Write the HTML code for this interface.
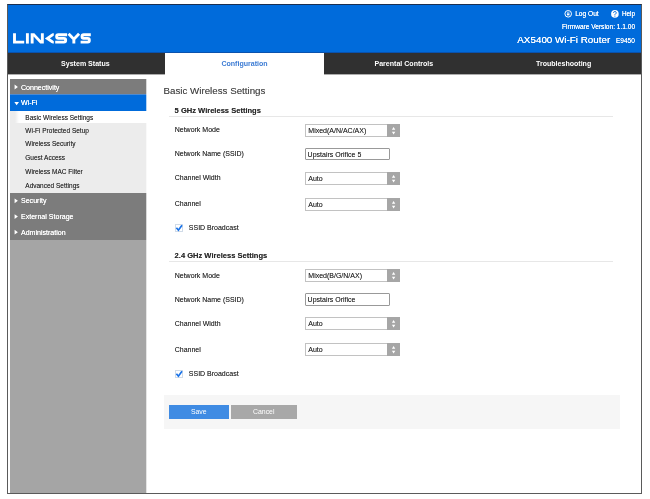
<!DOCTYPE html>
<html>
<head>
<meta charset="utf-8">
<style>
*{box-sizing:border-box;margin:0;padding:0}
html,body{width:650px;height:499px;background:#fff;overflow:hidden}
body{font-family:"Liberation Sans",sans-serif;position:relative;color:#333}
div,span,svg{position:absolute;white-space:nowrap}
#frame{left:7px;top:4px;width:635px;height:490px;border:1px solid #5a5a5a;border-top-color:#1a2f50;z-index:9}
#hdr{left:7px;top:4px;width:635px;height:49px;background:#006bdb;border-top:1px solid #0a2a5a;border-left:1px solid #0a2a5a}
#nav{left:7px;top:53px;width:635px;height:21px;background:#303030}
#nav2{left:7px;top:74px;width:635px;height:1px;background:#acacac}
.tab{top:53px;height:21px;line-height:21px;text-align:center;color:#fff;font-weight:bold;font-size:7.05px}
.tab.act{background:#fff;color:#3b7bd4;height:22px}
.hr{color:#fff;text-shadow:0 0 .3px #fff}
#side{left:10px;top:79px;width:137px;height:414px;background:#a5a5a5}
.mi{left:10px;width:137px;height:16px;background:#7c7c7c;color:#fff;font-size:7.05px;line-height:16px;padding-left:11px;text-shadow:0 0 .3px #fff}
.mi.on{background:#006bdb}
.tr{width:0;height:0;border-left:3.5px solid #fff;border-top:2.5px solid transparent;border-bottom:2.5px solid transparent}
.td{width:0;height:0;border-top:3.5px solid #fff;border-left:2.5px solid transparent;border-right:2.5px solid transparent}
#sub{left:10px;top:111px;width:137px;height:82px;background:#ececec}
.si{left:10px;width:137px;height:13px;line-height:13px;font-size:6.5px;color:#2a2a2a;padding-left:15.3px}
.si.on{background:linear-gradient(90deg,#ececec 0,#ececec 5px,#fff 9px)}
#h1{left:163.5px;top:84.5px;font-size:9.75px;line-height:12px;color:#444}
.sec{left:174.6px;font-size:7.55px;line-height:10px;font-weight:bold;color:#2a2a2a}
.line{left:169px;width:444px;height:1px;background:#e7e7e7}
.lb{left:174.7px;font-size:7px;line-height:10px;color:#2a2a2a}
.sel{left:305px;width:95px;height:13px;border:1px solid #c2c2c2;background:#fff;font-size:7px;line-height:11px;padding-left:2.3px;color:#2a2a2a}
.sel i{position:absolute;right:-1px;top:-1px;width:13px;height:13px;background:#a6a6a6}
.inp{left:305px;width:85px;height:12px;border:1px solid #999;border-radius:1px;background:#fff;font-size:7px;line-height:10px;padding-left:1.6px;color:#2a2a2a}
.cb{left:175px;width:8px;height:8px;border:1px solid #d0dbe8;background:#fff}
.btn{top:405px;height:14px;line-height:14px;text-align:center;color:#fff;font-size:6.9px}
.lb,.sel,.inp,.si,.sec{text-shadow:0 0 .4px rgba(42,42,42,.55)}
#h1{text-shadow:0 0 .4px rgba(68,68,68,.5)}
</style>
</head>
<body><div id="wrap" style="left:0;top:0;width:650px;height:499px;will-change:transform">
<div id="hdr"></div>
<svg style="left:0;top:0" width="110" height="53" viewBox="0 0 110 53" fill="none" stroke="#fff" stroke-width="2.9">
 <path d="M14.5 33.2V42.15H24.2"/>
 <path d="M27.4 33.2V43.6"/>
 <path d="M30.7 33.2H34.3L40.9 40.2V33.2H43.8V43.6H40.2L33.6 36.6V43.6H30.7Z" fill="#fff" stroke="none"/>
 <clipPath id="kc"><rect x="40" y="33.2" width="13.8" height="10.4"/></clipPath><path d="M56.4 32.2L47.4 38.4L56.4 44.6" stroke-linejoin="miter" stroke-miterlimit="10" clip-path="url(#kc)"/>
 <path d="M67.1 34.7H58.4Q56.65 34.7 56.65 36.55T58.4 38.4H63.9Q65.65 38.4 65.65 40.25T63.9 42.15H55.2"/>
 <path d="M68.6 33.7L73.85 39.2L79.1 33.7M73.85 38.4V43.6"/>
 <path d="M90.8 34.7H83.7Q82.05 34.7 82.05 36.55T83.7 38.4H87.7Q89.35 38.4 89.35 40.25T87.7 42.15H80.6"/>
</svg>
<svg style="left:560px;top:8px" width="80" height="12" viewBox="560 8 80 12">
 <circle cx="568.2" cy="13.8" r="3.3" fill="none" stroke="#fff" stroke-width="1"/>
 <rect x="566.9" y="13.4" width="2.6" height="2" fill="#fff"/>
 <path d="M567.4 13.4v-.6a.8.8 0 0 1 1.6 0v.6" fill="none" stroke="#fff" stroke-width=".6"/>
 <circle cx="614.9" cy="13.9" r="3.8" fill="#fff"/>
 <path d="M613.6 12.8a1.3 1.3 0 1 1 1.9 1.1q-.6.4-.6 1" fill="none" stroke="#006bdb" stroke-width="1"/>
 <rect x="614.4" y="15.6" width="1" height="1" fill="#006bdb"/>
</svg>
<div class="hr" style="left:575.2px;top:9px;font-size:6.6px;line-height:9px">Log Out</div>
<div class="hr" style="left:621.9px;top:9px;font-size:6.4px;line-height:9px">Help</div>
<div class="hr" style="left:562px;top:22px;font-size:6.59px;line-height:9px">Firmware Version: 1.1.00</div>
<div class="hr" style="left:517.3px;top:33px;font-size:9.85px;line-height:13px;text-shadow:0 0 .2px #fff">AX5400 Wi-Fi Router</div>
<div class="hr" style="left:616px;top:36px;font-size:6.5px;line-height:9px">E9450</div>

<div style="left:8px;top:52px;width:634px;height:1px;background:#0a52ad"></div>
<div id="nav"></div><div id="nav2"></div>
<div class="tab" style="left:6px;width:158.75px">System Status</div>
<div class="tab act" style="left:165px;width:159px">Configuration</div>
<div class="tab" style="left:324.5px;width:158.75px">Parental Controls</div>
<div class="tab" style="left:484.25px;width:158.75px">Troubleshooting</div>

<div id="side"></div>
<div class="mi" style="top:79px;line-height:17px">Connectivity</div>
<div class="mi on" style="top:95px">Wi-Fi</div>
<div style="left:10px;top:94px;width:137px;height:1px;background:#4d8ad0"></div>
<div id="sub"></div>
<div class="si on" style="top:111px;height:12px;line-height:13px">Basic Wireless Settings</div>
<div class="si" style="top:124.2px">Wi-Fi Protected Setup</div>
<div class="si" style="top:137.4px">Wireless Security</div>
<div class="si" style="top:150.9px">Guest Access</div>
<div class="si" style="top:165.3px">Wireless MAC Filter</div>
<div class="si" style="top:178.5px">Advanced Settings</div>
<div class="mi" style="top:193px">Security</div>
<div class="mi" style="top:209px">External Storage</div>
<div class="mi" style="top:225px;height:15px">Administration</div>

<svg style="left:0;top:70px" width="30" height="180" viewBox="0 70 30 180" fill="#fff"><path d="M14.6 84.6L17.9 87L14.6 89.4ZM14.6 198.4L17.9 200.8L14.6 203.20000000000002ZM14.6 214.2L17.9 216.6L14.6 219.0ZM14.6 229.79999999999998L17.9 232.2L14.6 234.6ZM14.3 102L19 102L16.65 105.2Z"/></svg>
<div id="h1">Basic Wireless Settings</div>
<div class="sec" style="top:105.5px">5 GHz Wireless Settings</div>
<div class="line" style="top:116px"></div>
<div class="lb" style="top:125px">Network Mode</div><div class="sel" style="top:124px">Mixed(A/N/AC/AX)<i><svg style="left:0;top:0" width="13" height="13" viewBox="0 0 13 13"><path d="M4.9 5.8L6.6 3.1L8.3 5.8ZM4.9 7.7L6.6 10.4L8.3 7.7Z" fill="#fff"/></svg></i></div>
<div class="lb" style="top:149px">Network Name (SSID)</div><div class="inp" style="top:148px;line-height:11px">Upstairs Orifice 5</div>
<div class="lb" style="top:173px">Channel Width</div><div class="sel" style="top:172px">Auto<i><svg style="left:0;top:0" width="13" height="13" viewBox="0 0 13 13"><path d="M4.9 5.8L6.6 3.1L8.3 5.8ZM4.9 7.7L6.6 10.4L8.3 7.7Z" fill="#fff"/></svg></i></div>
<div class="lb" style="top:199px">Channel</div><div class="sel" style="top:198px">Auto<i><svg style="left:0;top:0" width="13" height="13" viewBox="0 0 13 13"><path d="M4.9 5.8L6.6 3.1L8.3 5.8ZM4.9 7.7L6.6 10.4L8.3 7.7Z" fill="#fff"/></svg></i></div>
<div class="cb" style="top:224px"></div><svg style="left:174px;top:222px" width="12" height="12" viewBox="174 222 12 12"><path d="M176.4 227.8l2 2.4 3.6-5" fill="none" stroke="#1a73e8" stroke-width="1.7"/></svg><div class="lb" style="left:188.8px;top:222.7px">SSID Broadcast</div>

<div class="sec" style="top:250.7px">2.4 GHz Wireless Settings</div>
<div class="line" style="top:261px"></div>
<div class="lb" style="top:271px">Network Mode</div><div class="sel" style="top:269px">Mixed(B/G/N/AX)<i><svg style="left:0;top:0" width="13" height="13" viewBox="0 0 13 13"><path d="M4.9 5.8L6.6 3.1L8.3 5.8ZM4.9 7.7L6.6 10.4L8.3 7.7Z" fill="#fff"/></svg></i></div>
<div class="lb" style="top:295px">Network Name (SSID)</div><div class="inp" style="top:293px;height:13px;line-height:12px">Upstairs Orifice</div>
<div class="lb" style="top:319px">Channel Width</div><div class="sel" style="top:317px">Auto<i><svg style="left:0;top:0" width="13" height="13" viewBox="0 0 13 13"><path d="M4.9 5.8L6.6 3.1L8.3 5.8ZM4.9 7.7L6.6 10.4L8.3 7.7Z" fill="#fff"/></svg></i></div>
<div class="lb" style="top:345px">Channel</div><div class="sel" style="top:343px">Auto<i><svg style="left:0;top:0" width="13" height="13" viewBox="0 0 13 13"><path d="M4.9 5.8L6.6 3.1L8.3 5.8ZM4.9 7.7L6.6 10.4L8.3 7.7Z" fill="#fff"/></svg></i></div>
<div class="cb" style="top:370px"></div><svg style="left:174px;top:368px" width="12" height="12" viewBox="174 222 12 12"><path d="M176.4 227.8l2 2.4 3.6-5" fill="none" stroke="#1a73e8" stroke-width="1.7"/></svg><div class="lb" style="left:188.8px;top:368.5px">SSID Broadcast</div>

<div style="left:164px;top:395px;width:456px;height:34px;background:#f6f6f6"></div>
<div class="btn" style="left:169px;width:59.5px;background:#3f8be3">Save</div>
<div class="btn" style="left:231px;width:65.5px;background:#a8a8a8">Cancel</div>
<div style="left:146px;top:79px;width:1px;height:414px;background:#fff;opacity:.7"></div>
<div id="frame"></div>
</div></body>
</html>
